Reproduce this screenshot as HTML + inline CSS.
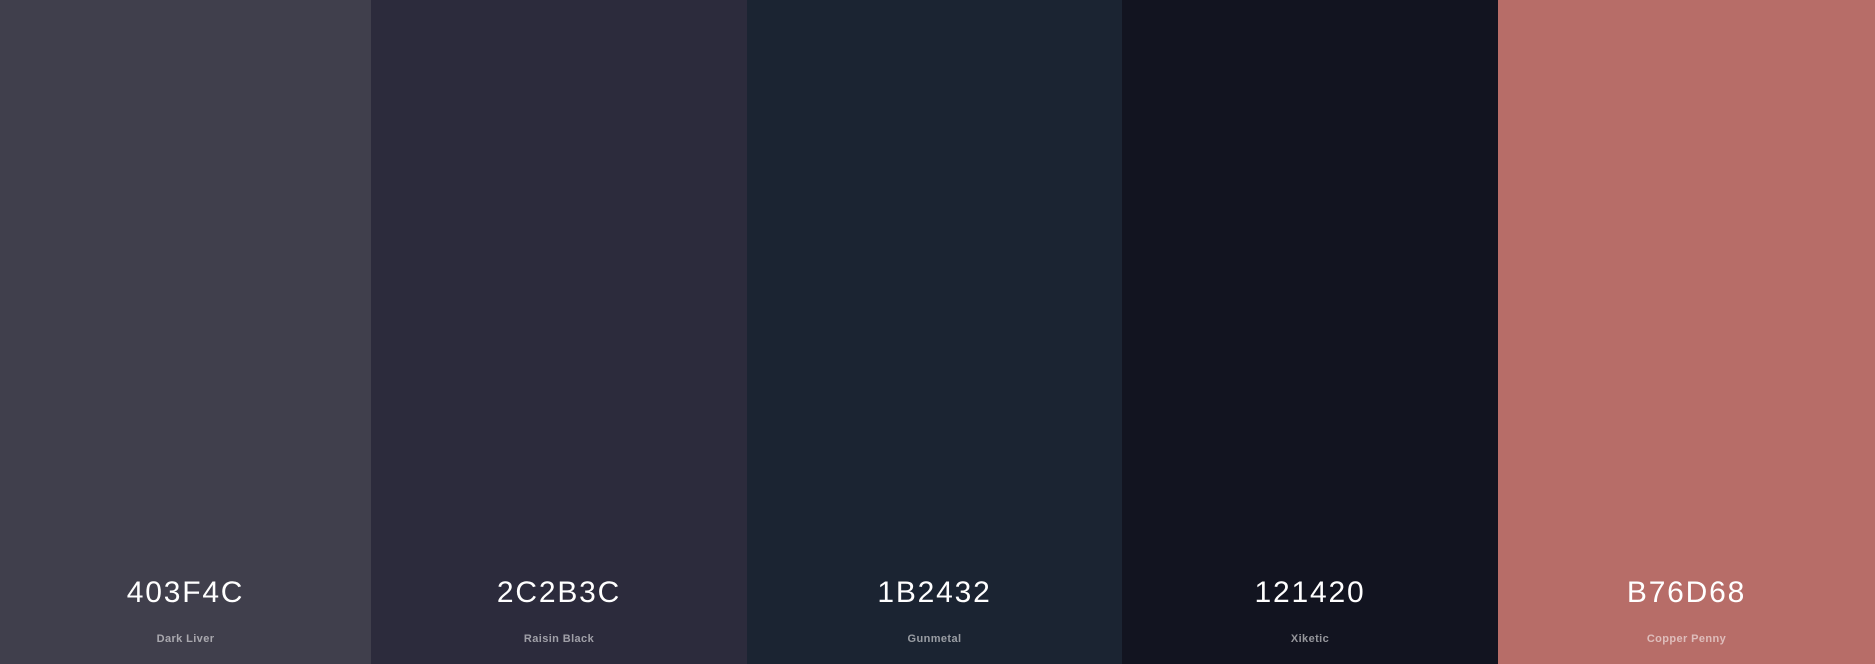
<!DOCTYPE html>
<html><head><style>
html,body{margin:0;padding:0;width:1875px;height:664px;overflow:hidden}
.w{display:flex;height:664px}
.c{position:relative;flex:none}
.h{position:absolute;left:0;right:0;top:576px;text-align:center;color:#fff;font:30px "Liberation Sans",sans-serif;letter-spacing:1.8px}
.n{position:absolute;left:0;right:0;top:633px;text-align:center;color:rgba(255,255,255,.55);font:bold 11px "Liberation Sans",sans-serif;letter-spacing:0.4px}
</style></head><body><div class="w">
<div class="c" style="width:371px;background:#403F4C"><div class="h">403F4C</div><div class="n">Dark Liver</div></div>
<div class="c" style="width:376px;background:#2C2B3C"><div class="h">2C2B3C</div><div class="n">Raisin Black</div></div>
<div class="c" style="width:375px;background:#1B2432"><div class="h">1B2432</div><div class="n">Gunmetal</div></div>
<div class="c" style="width:376px;background:#121420"><div class="h">121420</div><div class="n">Xiketic</div></div>
<div class="c" style="width:377px;background:#B76D68"><div class="h">B76D68</div><div class="n">Copper Penny</div></div>
</div></body></html>
